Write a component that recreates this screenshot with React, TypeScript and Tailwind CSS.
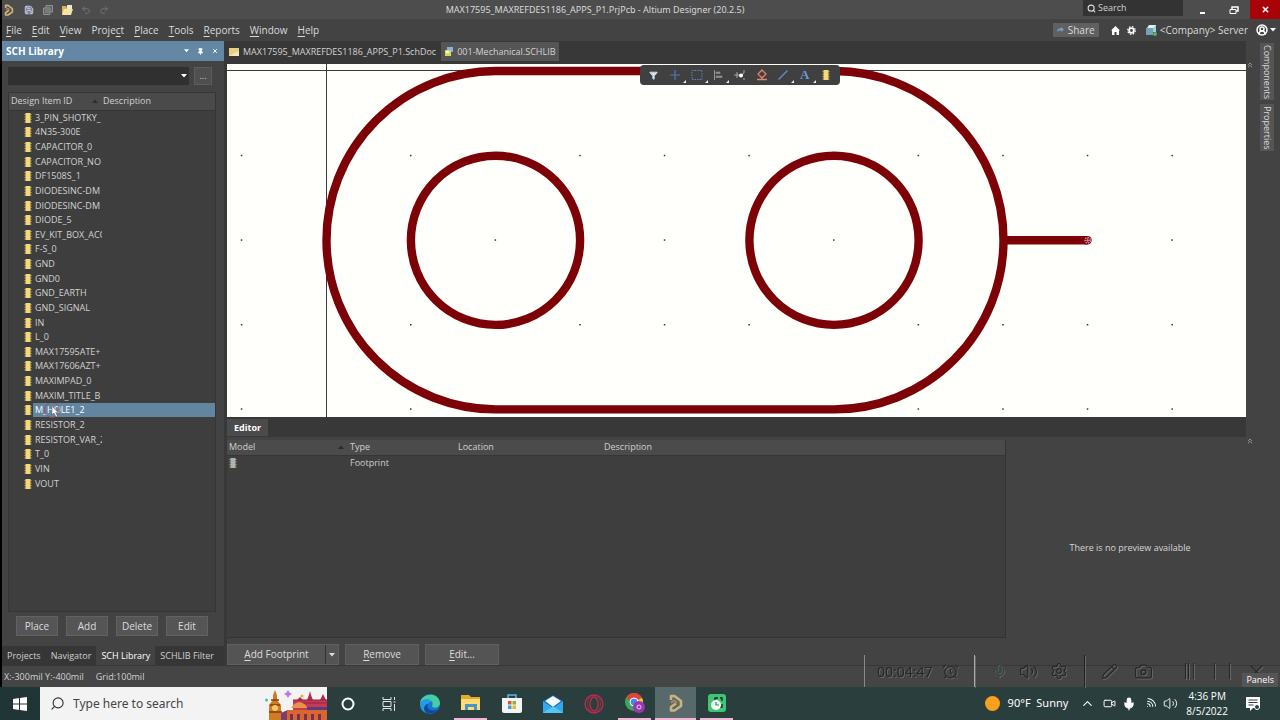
import React from "react";
import {
  Search, Settings, ChevronsUp, ChevronUp, Mic, Volume2, AlarmClock,
  Pencil, Camera, X, Undo2, Redo2, Filter, Save, CircleUserRound, Video, Wifi, Pin,
} from "lucide-react";

const menus: [string, string, string][] = [
  ["", "F", "ile"], ["", "E", "dit"], ["", "V", "iew"], ["Proje", "c", "t"], ["", "P", "lace"],
  ["", "T", "ools"], ["", "R", "eports"], ["", "W", "indow"], ["", "H", "elp"],
];

const items = [
  "3_PIN_SHOTKY_", "4N35-300E", "CAPACITOR_0", "CAPACITOR_NO", "DF1508S_1", "DIODESINC-DM",
  "DIODESINC-DM", "DIODE_5", "EV_KIT_BOX_ACC", "F-S_0", "GND", "GND0", "GND_EARTH", "GND_SIGNAL",
  "IN", "L_0", "MAX17595ATE+", "MAX17606AZT+", "MAXIMPAD_0", "MAXIM_TITLE_B", "M_HOLE1_2",
  "RESISTOR_2", "RESISTOR_VAR_2", "T_0", "VIN", "VOUT",
];

const columns = Array.from({ length: 12 }, (_, i) => 241.5 + i * 84.6).filter((_, i) => i !== 1);
const rows = [155.5, 240, 324.7, 409];

function Key({ children }: { children: React.ReactNode }) {
  return <u className="underline decoration-1 underline-offset-2">{children}</u>;
}

function Caret({ className = "" }: { className?: string }) {
  return (
    <svg viewBox="0 0 6 4" className={`h-1 w-1.5 ${className}`} fill="currentColor">
      <path d="M0 0h6L3 3.5z" />
    </svg>
  );
}

function Part({ className = "text-[#f3d97c]" }: { className?: string }) {
  return (
    <svg viewBox="0 0 8 10" className={`h-2.5 w-2 shrink-0 ${className}`}>
      <path d="M0 1.5h8M0 4h8M0 6.5h8M0 9h8" stroke="#8f7638" strokeWidth="1" />
      <path d="M1.5 0h5v10h-5z" fill="currentColor" />
    </svg>
  );
}

function AltiumLogo({ className }: { className: string }) {
  return (
    <svg viewBox="0 0 14 18" className={className} fill="none" strokeWidth="2.6" strokeLinejoin="round">
      <path d="M2 6V2h3.500L12 7v5l-6.500 4.500H2V13l5-3.500" stroke="#cdb27a" />
      <path d="M2 8.500l3.500-1.800L8 9" stroke="#a3895a" strokeWidth="2" />
    </svg>
  );
}

function TitleBar() {
  return (
    <header className="flex h-[19px] items-center bg-[#4d4d4d] text-[10px] text-[#d8d8d8]">
      <div className="flex items-center">
        <AltiumLogo className="ml-0.5 h-3 w-2.5" />
        <button aria-label="Save" className="ml-2.5 text-[#d5d8ee]"><Save size={10} fill="#7b80a0" /></button>
        <button aria-label="Save all" className="ml-[9px]">
          <svg viewBox="0 0 10 10" className="size-2.5" fill="#666" stroke="#909090"><path d="M3 .5h6.500v6.500H3z" /><path d="M.5 3h6.500v6.500H.5zM2 5h4M2 7h4" /></svg>
        </button>
        <button aria-label="Open" className="ml-[9px]">
          <svg viewBox="0 0 11 10" className="h-2.5 w-[11px]"><path d="M0 1h4l1 2h4v6H0z" fill="#d7b55d" /><path d="M2 4h9L9 10H0z" fill="#f7e4a0" /><path d="M5 0h5v4H5z" fill="#e9e9df" /></svg>
        </button>
        <button aria-label="Undo" className="ml-2 text-[#777]"><Undo2 size={10} /></button>
        <button aria-label="Redo" className="ml-2 text-[#777]"><Redo2 size={10} /></button>
      </div>
      <h1 className="flex-1 pr-0.5 text-center font-['Noto_Sans',sans-serif] text-[9px]">MAX17595_MAXREFDES1186_APPS_P1.PrjPcb - Altium Designer (20.2.5)</h1>
      <div className="flex h-full items-center">
        <label className="flex h-4 w-[100px] items-center gap-0.5 self-start bg-[#333] pl-1">
          <Search size={9} strokeWidth={3} />
          <input aria-label="Search" placeholder="Search" className="w-16 bg-transparent text-[9px] outline-none placeholder:text-[#d0d0d0]" />
        </label>
        <button aria-label="Minimize" className="flex h-full w-[38px] items-center justify-center pt-1.5"><span className="h-0.5 w-[5px] bg-white" /></button>
        <button aria-label="Restore" className="flex h-full w-[25px] items-center justify-center">
          <svg viewBox="0 0 10 8" className="h-2 w-2.5" fill="none" stroke="white"><path d="M3 3V1h6v4H7" strokeWidth="1.500" /><path d="M1 3.500h6v4H1z" /></svg>
        </button>
        <button aria-label="Close" className="ml-1 flex h-full w-[30px] items-center justify-center bg-[#a80408] text-white"><X size={9} strokeWidth={4} /></button>
      </div>
    </header>
  );
}

function MenuBar() {
  return (
    <nav className="flex h-[22px] items-center justify-between bg-[#434343] text-[10px] text-[#dadada]">
      <div className="flex gap-2.5 pl-1">
        {menus.map(([a, b, c]) => (
          <button key={a + b + c}>{a}<Key>{b}</Key>{c}</button>
        ))}
      </div>
      <div className="flex items-center pr-1">
        <button className="flex h-3.5 w-[46px] items-center justify-center gap-1 bg-[#606060]">
          <svg viewBox="0 0 7 6" className="h-1.5 w-[7px]" fill="#6e9dcc"><path d="M0 5c0-3 2-4 4-4V0l3 2.500L4 5V3.500C2 3.500 1 4 0 5z" /></svg>
          Share
        </button>
        <button aria-label="Home" className="ml-3">
          <svg viewBox="0 0 9 9" className="size-[9px]" fill="white"><path d="M4.500 0L9 4.500H8V9H5.500V6h-2v3H1V4.500H0z" /></svg>
        </button>
        <button aria-label="Settings" className="ml-[7px]">
          <svg viewBox="0 0 10 10" className="size-[9px]" fill="none" stroke="white"><circle cx="5" cy="5" r="2.600" strokeWidth="2" /><circle cx="5" cy="5" r="4.200" strokeWidth="1.400" strokeDasharray="1.650 1.650" /></svg>
        </button>
        <svg viewBox="0 0 11 11" className="ml-2.5 size-[11px]"><path d="M3 0h7v7H3z" fill="#9fd0d4" /><path d="M0 3h7v7H0z" fill="#6fa3b8" /><path d="M1 3l2-3h7L7 3z" fill="#dff1f1" /><circle cx="9" cy="9" r="2" fill="#5bb06a" /></svg>
        <button className="ml-[3px]">&lt;Company&gt; Server</button>
        <button aria-label="Account" className="ml-2 flex items-center gap-0.5 text-white"><CircleUserRound size={12} strokeWidth={3} /><Caret className="w-1" /></button>
      </div>
    </nav>
  );
}

function LibraryPanel() {
  return (
    <aside className="flex w-[222px] shrink-0 flex-col bg-[#434343]">
      <div className="flex h-5 items-center bg-[#6487a6] px-1 text-white">
        <h2 className="flex-1 text-[10px] font-bold">SCH Library</h2>
        <button aria-label="Panel menu"><Caret className="w-[5px]" /></button>
        <button aria-label="Pin" className="ml-2"><Pin size={7} fill="white" strokeWidth={3} /></button>
        <button aria-label="Close panel" className="mr-0.5 ml-2"><X size={6} strokeWidth={4} /></button>
      </div>
      <div className="mt-1.5 flex h-[18px] gap-[5px] pr-3 pl-1.5">
        <button aria-label="Library" className="flex flex-1 items-center justify-end bg-[#303030] pr-0.5 text-white"><Caret /></button>
        <button aria-label="Browse" className="w-[18px] border border-[#5c5c5c] bg-[#4f4f4f] text-[9px] leading-3 text-[#ccc]">...</button>
      </div>
      <div className="mt-[7px] mr-2 ml-1.5 flex-1 border border-[#353535] bg-[#3e3e3e]">
        <table className="h-[398px] w-full table-fixed text-[9px] leading-3 text-[#d2d2d2]">
          <thead>
            <tr className="h-[17px] bg-[#4a4a4a] text-left">
              <th className="w-[93px] border-b border-[#363636] pl-0.5 font-normal">
                <div className="flex items-center justify-between pr-1">Design Item ID <Caret className="h-1 w-1 rotate-180 text-[#2c2c2c]" /></div>
              </th>
              <th className="border-b border-[#363636] pl-px font-normal">Description</th>
            </tr>
          </thead>
          <tbody>
            {items.map((name, i) => (
              <tr key={i}>
                <td className="overflow-hidden p-0">
                  <div className="flex h-3.5 items-center gap-px pl-[15px] leading-[14px]">
                    <Part />
                    <span className={name === "M_HOLE1_2" ? "relative flex-1 bg-[#62869f] pl-0.5 whitespace-nowrap text-white" : "flex-1 overflow-hidden pl-0.5 whitespace-nowrap"}>
                      {name}
                      {name === "M_HOLE1_2" && (
                        <svg viewBox="0 0 20 16" className="absolute -top-px left-2.5 h-4 w-5">
                          <circle cx="9" cy="8" r="7.500" fill="none" stroke="#a8455f" strokeWidth="1" opacity=".8" />
                          <path d="M9 4v9l2-2 2 4 1.500-.8-1.800-3.700H15z" fill="white" stroke="#333" strokeWidth=".4" />
                        </svg>
                      )}
                    </span>
                  </div>
                </td>
                <td className="p-0">{name === "M_HOLE1_2" && <div className="h-3.5 bg-[#62869f]" />}</td>
              </tr>
            ))}
          </tbody>
        </table>
      </div>
      <div className="mt-1 flex justify-center gap-2 pr-0.5 text-[10px] text-[#dcdcdc]">
        {["Place", "Add", "Delete", "Edit"].map((t) => (
          <button key={t} className="h-5 w-[42px] border border-[#626262] bg-[#555]">{t}</button>
        ))}
      </div>
      <div className="mt-2.5 flex h-[19px] bg-[#363636] text-[9px] text-[#cfcfcf]">
        {["Projects", "Navigator", "SCH Library", "SCHLIB Filter"].map((t) => (
          <button key={t} className={t === "SCH Library" ? "bg-[#434343] px-[5px] text-white" : "px-[5px]"}>{t}</button>
        ))}
      </div>
    </aside>
  );
}

function Drawing() {
  return (
    <svg viewBox="227 64 1019 353" className="block w-full bg-[#fffffb]" role="img" aria-label="Schematic symbol">
      <path d="M227 70.500h1019M326.500 64v353" stroke="#3a3a3a" strokeWidth="1" />
      {rows.map((y) => columns.map((x) => <rect key={`${x}-${y}`} x={x - 0.7} y={y - 0.7} width="1.5" height="1.5" fill="#333" />))}
      <g fill="none" stroke="#7c0207" strokeWidth="8.400">
        <rect x="326.500" y="71" width="677" height="338.400" rx="169.200" />
        <circle cx="495.500" cy="240.300" r="84.600" />
        <circle cx="834" cy="240.300" r="84.600" />
        <path d="M1003 240.300h84.500" />
        <path d="M1087 240.300h.5" strokeLinecap="round" />
      </g>
      <circle cx="1087.800" cy="240.300" r="2.800" fill="none" stroke="#d9a6c0" strokeWidth="1.200" strokeDasharray="1.500 1" />
      <path d="M1085.500 240.300h4.500M1087.800 238v4.500" stroke="#e5c1d4" strokeWidth=".7" />
    </svg>
  );
}

function ActiveBar() {
  const icon = "size-3";
  const tools: [string, React.ReactNode, boolean][] = [
    ["Filter", <Filter size={9} fill="#cfe4ee" className="text-[#cfe4ee]" />, false],
    ["Move", <svg viewBox="0 0 12 12" className={icon} stroke="#5277b5" strokeWidth="1.200"><path d="M6 1v10M1 6h10" /></svg>, true],
    ["Select", <svg viewBox="0 0 12 12" className={icon} fill="none" stroke="#5e7fc0" strokeDasharray="1.500 1"><path d="M1 1.500h10v9H1z" /></svg>, true],
    ["Align", <svg viewBox="0 0 12 12" className={icon} fill="#888" stroke="#999"><path d="M2.500 1v10" /><path d="M4 3h4v1.500H4zM4 7h6v1.500H4z" strokeWidth=".6" /></svg>, true],
    ["Pin", <svg viewBox="0 0 12 12" className={icon} fill="none" stroke="#a5a5a5"><path d="M0 6h6M3 3v6M10 1v3L7 6M10 11V9" /><circle cx="7" cy="6.500" r="2" fill="white" stroke="none" /></svg>, false],
    ["Directive", <svg viewBox="0 0 12 12" className={icon} fill="none" stroke="#df8568" strokeWidth="1.300"><path d="M6 1l4 4-4 4-4-4zM6 9v2M1 10.500h10" /></svg>, false],
    ["Line", <svg viewBox="0 0 12 12" className={icon} stroke="#5f91d1" strokeWidth="1.300"><path d="M1.500 10.500l9-9" /></svg>, true],
    ["Text", <span className="font-['Liberation_Serif',serif] text-[13px] leading-3 font-bold text-[#6a97dc]">A</span>, true],
    ["Part", <Part />, false],
  ];
  return (
    <div className="absolute top-px left-[413px] flex h-5 w-[200px] items-center rounded-sm bg-[#404040] px-[3px]">
      {tools.map(([label, glyph, more]) => (
        <button key={label} aria-label={label} className="relative flex h-full flex-1 items-center justify-center">
          {glyph}
          {more && <svg viewBox="0 0 3 3" className="absolute right-0 bottom-0.5 size-[3px]" fill="#eee"><path d="M3 0v3H0z" /></svg>}
        </button>
      ))}
    </div>
  );
}

function Center() {
  return (
    <main className="flex min-w-0 flex-1 flex-col">
      <div className="flex h-[23px] items-center bg-[#383838] pb-0.5 text-[9px] text-[#d2d2d2]">
        <button className="flex items-center gap-1 px-0.5 whitespace-nowrap">
          <svg viewBox="0 0 10 8" className="h-2 w-2.5"><path d="M0 0h10v8H0z" fill="#e8cf86" /><path d="M0 8l10-5v5z" fill="#f6e8b6" /></svg>
          MAX17595_MAXREFDES1186_APPS_P1.SchDoc
        </button>
        <button className="ml-[3px] flex h-[19px] items-center gap-[3px] bg-[#555] px-[3px] whitespace-nowrap">
          <svg viewBox="0 0 10 10" className="size-2.5"><path d="M3 0h6v5H3z" fill="#86b4dc" /><path d="M1 3h6v6H1z" fill="#d9d85e" /><path d="M2 4h3v2H2z" fill="#fbfae0" /></svg>
          001-Mechanical.SCHLIB
        </button>
      </div>
      <div className="relative"><Drawing /><ActiveBar /></div>
      <div className="flex h-5 bg-[#383838] pt-0.5">
        <button className="h-[17px] bg-[#4b4b4b] px-[7px] text-[9px] font-bold text-white">Editor</button>
      </div>
      <div className="mt-[3px] flex flex-1">
        <div className="w-[779px] border-r border-b border-[#333] bg-[#3e3e3e]">
          <table className="w-full table-fixed text-left text-[9px] leading-3 text-[#cfcfcf]">
            <thead>
              <tr className="h-[15px] bg-[#4b4b4b]">
                <th className="w-[123px] border-b border-[#363636] pl-0.5 font-normal"><div className="flex items-center justify-between pr-1.5">Model <Caret className="h-1 w-1 rotate-180 text-[#2c2c2c]" /></div></th>
                <th className="w-[108px] border-b border-[#363636] font-normal">Type</th>
                <th className="w-[146px] border-b border-[#363636] font-normal">Location</th>
                <th className="border-b border-[#363636] font-normal">Description</th>
              </tr>
            </thead>
            <tbody>
              <tr className="h-[15px]"><td className="pl-0.5"><Part className="text-[#a9b4b8]" /></td><td>Footprint</td><td /><td /></tr>
            </tbody>
          </table>
        </div>
        <div className="flex flex-1 items-center justify-center pt-[18px] pl-2 text-[9px] text-[#d5d5d5]">There is no preview available</div>
      </div>
      <div className="mt-1.5 flex h-[21px] gap-1.5 text-[10px] text-[#dcdcdc]">
        <div className="flex border border-[#606060] bg-[#545454]">
          <button className="w-[97px]"><Key>A</Key>dd Footprint</button>
          <button aria-label="More footprint actions" className="flex w-[13px] items-center justify-center border-l border-[#333]"><Caret /></button>
        </div>
        <button className="w-[74px] border border-[#606060] bg-[#545454]"><Key>R</Key>emove</button>
        <button className="w-[74px] border border-[#606060] bg-[#545454]"><Key>E</Key>dit...</button>
      </div>
    </main>
  );
}

function RecorderOverlay() {
  return (
    <div className="absolute right-0 bottom-0 flex h-8 w-[416px] items-center border-l border-[#888] text-[#262626]">
      <div className="flex h-full flex-1 items-center [filter:drop-shadow(1px_1px_0_#666)]">
        <span className="ml-3 text-[14px]">00:04:47</span>
        <AlarmClock size={17} strokeWidth={1.5} className="ml-2.5" />
        <span className="ml-[15px] h-full w-px bg-[#aaa]" />
        <Mic size={16} strokeWidth={1.5} className="ml-4 text-[#2b4444]" />
        <Volume2 size={19} strokeWidth={1.5} className="ml-3" />
        <Settings size={18} strokeWidth={1.5} className="ml-3" />
        <span className="ml-4 h-full w-px bg-[#222]" />
        <Pencil size={17} strokeWidth={1.5} className="ml-4" />
        <Camera size={19} strokeWidth={1.5} className="ml-4" />
        <span className="ml-8 h-4 w-1 border-x border-[#242424]" />
        <span className="ml-1 h-4 w-px bg-[#2a2a2a]" />
        <span className="ml-5 h-4 w-4 border-x border-[#262626]" />
        <X size={21} strokeWidth={1.5} className="ml-4" />
      </div>
    </div>
  );
}

function StatusBar() {
  return (
    <footer className="relative flex h-[22px] items-center border-t border-[#373737] bg-[#454545] pl-0.5 text-[9px] text-[#d0d0d0]">
      <span>X:-300mil Y:-400mil</span>
      <span className="ml-3">Grid:100mil</span>
      <RecorderOverlay />
      <button className="relative mr-0.5 ml-auto h-3.5 self-end bg-[#555] px-1 leading-3 text-white">Panels</button>
    </footer>
  );
}

function Landmark() {
  return (
    <svg viewBox="0 0 62 32" className="h-8 w-[62px]">
      <path d="M4 32V17l4-5V7l2-5 2 5v5l4 5v15z" fill="#d27b25" />
      <path d="M5 17h10M6 12h8M4 24h13" stroke="#7c3e14" strokeWidth="1.500" />
      <circle cx="10" cy="20" r="3" fill="#f6c95a" />
      <path d="M28 12h34v14H28z" fill="#c73a52" /><path d="M32 12l3-3 3 3M42 12l2-5 1-4 1 4 2 5M55 12l3-6 3 6" fill="#b32b48" />
      <path d="M28 12h34M30 15h32" stroke="#8d2447" strokeWidth="1" />
      <path d="M16 32V25q10-6 16 0v7z" fill="#7f3d6e" />
      <path d="M26 20q8-12 17 0z" fill="#e9924a" /><path d="M22 22h40v10H22z" fill="#d9652f" />
      <path d="M25 32v-6h3v6M32 32v-6h3v6M39 32v-6h3v6M46 32v-6h3v6M53 32v-6h3v6" fill="#743154" />
      <path d="M42 19h20v3H42z" fill="#5a3c86" />
      <path d="M23 2l1.500 2.500L27 6l-2.500 1.500L23 10l-1.500-2.500L19 6l2.500-1.500z" fill="#b67ae0" />
      <circle cx="1.500" cy="12" r="1.500" fill="#4fc08d" /><circle cx="37" cy="8" r="1.500" fill="#f2a63c" />
    </svg>
  );
}

function TaskbarIcons() {
  const apps: [string, React.ReactNode, string][] = [
    ["Cortana", <svg viewBox="0 0 14 14" className="size-3.5" fill="none" stroke="#fff" strokeWidth="2"><circle cx="7" cy="7" r="5.500" /></svg>, ""],
    ["Task View", <svg viewBox="0 0 14 14" className="size-3.5" fill="none" stroke="#e5e5e5"><path d="M1 0v2.500h8V0M1 14v-2.500h8V14M1 4.500h8v5H1zM12.500 0v3M12.500 7v7M11.500 5h2" /></svg>, ""],
    ["Edge", <svg viewBox="0 0 20 20" className="size-5"><circle cx="10" cy="10" r="10" fill="#1577cf" /><path d="M0 9C1-1 19-3 20 9c0 5-7 6-8 3 2-4-1-6-4-6-4 0-7 1-8 3z" fill="#46cda0" /><path d="M0 9c3-5 10-5 12-1-5-1-7 7 1 9-3 4-13 3-13-8z" fill="#249be4" /><path d="M8 10c-2 4 3 9 10 5-4 6-13 6-14 0 0-3 2-5 4-5z" fill="#0d499d" /></svg>, ""],
    ["File Explorer", <svg viewBox="0 0 20 17" className="h-[17px] w-5"><path d="M0 1h8l2 2h9v13H0z" fill="#e5a92d" /><path d="M0 5h19v11H0z" fill="#ffdc72" /><path d="M4 16v-6h12v6h-3v-3H7v3z" fill="#4794d0" /></svg>, "mx-1 w-[33px] border-b-2 border-[#efb7d3]"],
    ["Store", <svg viewBox="0 0 20 20" className="size-5"><path d="M6 5V1h8v4" fill="none" stroke="#5ab6e8" strokeWidth="1.500" /><path d="M0 4h20v13q0 2-2 2H2q-2 0-2-2z" fill="#f4f4f4" /><path d="M6 7h3.500v3.500H6z" fill="#e85032" /><path d="M10.500 7H14v3.500h-3.500z" fill="#7eb740" /><path d="M6 11.500h3.500V15H6z" fill="#35a2e4" /><path d="M10.500 11.500H14V15h-3.500z" fill="#f3b61e" /></svg>, ""],
    ["Mail", <svg viewBox="0 0 20 18" className="h-[18px] w-5"><path d="M0 6l10-6 10 6v12H0z" fill="#1261ad" /><path d="M2 6l8-5 8 5-8 6z" fill="#f3f8fb" /><path d="M0 6l10 7 10-7v12H0z" fill="#34a8ec" /><path d="M0 18l10-7 10 7z" fill="#55c7f6" /></svg>, ""],
    ["Opera", <svg viewBox="0 0 20 20" className="size-5" fill="none" stroke="#b92b4e" strokeWidth="1.400"><circle cx="10" cy="10" r="9" /><ellipse cx="10" cy="10" rx="4" ry="7" /><ellipse cx="10" cy="10" rx="6.500" ry="8.500" strokeWidth=".7" /></svg>, ""],
    ["Chrome", <svg viewBox="0 0 20 20" className="size-5"><circle cx="9" cy="9" r="9" fill="#3ea55a" /><path d="M1 5a9 9 0 0 1 16 0L9 9z" fill="#df4638" /><path d="M17 5a9 9 0 0 1-7 13l-1-9z" fill="#f6c73b" /><circle cx="9" cy="9" r="4" fill="#4388ed" stroke="white" /><circle cx="14" cy="14" r="6" fill="#9938b3" /><circle cx="14" cy="14" r="2" fill="none" stroke="#e8c8f0" /></svg>, "mx-1 w-[33px] border-b-2 border-[#efb7d3]"],
    ["Altium Designer", <AltiumLogo className="h-[18px] w-3.5" />, "w-[41px] border-b-2 border-[#efb7d3] bg-[#58696b]"],
    ["Recorder", <svg viewBox="0 0 18 18" className="size-[18px]"><rect width="18" height="18" rx="3" fill="#3fc673" /><path d="M7 7V4h3M12 4h2v3M14 10v3h-2" fill="none" stroke="#123" strokeWidth="1.300" /><circle cx="8" cy="11" r="5" fill="#f4fff8" /><path d="M8 8v3h3" fill="none" stroke="#2a8c52" strokeWidth="1.200" /></svg>, "mx-1 w-[33px] border-b-2 border-[#efb7d3]"],
  ];
  return (
    <div className="flex">
      {apps.map(([label, icon, extra]) => (
        <button key={label} aria-label={label} className={`flex items-center justify-center ${extra || "w-[41px]"}`}>{icon}</button>
      ))}
    </div>
  );
}

function Taskbar() {
  return (
    <div className="flex h-[33px] bg-[#2a3e3e] text-white">
      <button aria-label="Start" className="flex w-10 items-center justify-center bg-[#203536]">
        <svg viewBox="0 0 14 14" className="size-3.5" fill="white"><path d="M0 2l6-1v5.500H0zM7 1l7-1v6.500H7zM0 7.500h6V13l-6-1zM7 7.500h7V14l-7-1z" /></svg>
      </button>
      <label className="flex w-[287px] items-center bg-[#f3f3f3] pl-2.5 text-[#333]">
        <Search size={15} strokeWidth={1.8} className="-scale-x-100" />
        <input aria-label="Type here to search" placeholder="Type here to search" className="ml-2 min-w-0 flex-1 bg-transparent font-['Noto_Sans',sans-serif] text-[12px] outline-none placeholder:text-[#444]" />
        <Landmark />
      </label>
      <TaskbarIcons />
      <div className="ml-auto flex items-center">
        <span className="size-[15px] rounded-full bg-[#f9a01c]" />
        <span className="ml-2 font-['Noto_Sans',sans-serif] text-[11px]">90°F&nbsp; Sunny</span>
        <ChevronUp size={15} strokeWidth={1.8} className="ml-3" />
        <Video size={13} strokeWidth={1.8} className="ml-2" />
        <Mic size={14} fill="white" className="ml-1.5" />
        <Wifi size={13} strokeWidth={1.8} className="ml-2 rotate-45" />
        <Volume2 size={15} strokeWidth={1.5} className="ml-1.5" />
        <div className="ml-2 text-center text-[10px] leading-[15px]"><div>4:36 PM</div><div>8/5/2022</div></div>
        <svg viewBox="0 0 14 14" className="mr-5 ml-[18px] size-3.5"><path d="M0 0h14v11H7l-3 3v-3H0z" fill="white" /><path d="M2.500 3h9M2.500 5.500h9M2.500 8h5" stroke="#2a3e3e" /><circle cx="11" cy="10" r="2.500" fill="#2a3e3e" stroke="white" /></svg>
      </div>
    </div>
  );
}

export default function App() {
  return (
    <div className="flex min-h-screen flex-col bg-[#434343] font-['Open_Sans','Noto_Sans',sans-serif]">
      <div className="flex flex-1 flex-col border-l-2 border-black">
        <TitleBar />
        <MenuBar />
        <div className="flex flex-1">
          <LibraryPanel />
          <div className="w-[3px] shrink-0 bg-[#383838]" />
          <Center />
          <div className="flex w-[34px] shrink-0">
            <div className="flex w-2.5 flex-col text-[#bbb]">
              <ChevronsUp size={8} className="mt-5" />
              <ChevronsUp size={8} className="mt-[368px]" />
            </div>
            <div className="ml-1 flex w-3.5 flex-col gap-1 pt-0.5 text-[9px] leading-[14px] text-[#dadada]">
              <button className="h-[57px] bg-[#555] [writing-mode:vertical-rl]">Components</button>
              <button className="h-[47px] bg-[#555] [writing-mode:vertical-rl]">Properties</button>
            </div>
          </div>
        </div>
        <StatusBar />
      </div>
      <Taskbar />
    </div>
  );
}
